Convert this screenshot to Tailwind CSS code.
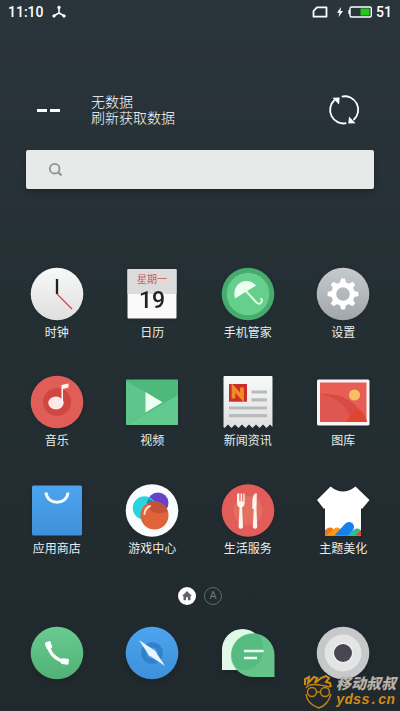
<!DOCTYPE html>
<html lang="zh-CN">
<head>
<meta charset="utf-8">
<meta name="viewport" content="width=device-width, initial-scale=1">
<title>桌面</title>
<script src="https://cdn.jsdelivr.net/npm/@tailwindcss/browser@4"></script>
</head>
<body class="relative flex min-h-screen flex-col bg-linear-to-b from-[#2a343b] via-[#242f34] via-45% to-[#20292d] font-['Roboto','Noto_Sans_CJK_SC',sans-serif] text-[#e9eeee]">

<header class="flex h-6 items-center justify-between px-2 text-sm font-medium text-white">
  <div class="flex items-center gap-2">
    <time>11:10</time>
    <svg class="size-3.5" viewBox="0 0 14 14" fill="#fff" stroke="#fff" aria-hidden="true"><path d="M7 3v5M7 8l-4.500 2.500M7 8l4.500 2.500" stroke-width="1.500"/><circle cx="7" cy="2.500" r="1.300"/><circle cx="2" cy="11" r="1.200"/><circle cx="12" cy="11" r="1.200"/></svg>
  </div>
  <div class="flex items-center gap-1">
    <svg class="mr-1 h-3 w-4" viewBox="0 0 16 12" fill="none" stroke="#fff" stroke-width="1.800" aria-hidden="true"><path d="M5 1.300h9.500v9.400H1.500V5z" stroke-linejoin="round"/></svg>
    <svg class="h-3 w-2" viewBox="0 0 8 12" fill="#fff" aria-hidden="true"><path d="M5 1 1 6.700h2.400L2.500 11l4.500-6H4.500z"/></svg>
    <svg class="h-3 w-6" viewBox="0 0 24 12" aria-hidden="true"><rect x="2" y="1" width="21.300" height="10" rx="1.500" fill="none" stroke="#fff" stroke-width="1.400"/><path d="M.4 4h1.600v4H.4z" fill="#fff"/><path d="M12.500 2.500h9v7h-9z" fill="#20c91c"/></svg>
    <span>51</span>
  </div>
</header>

<section class="mt-[70px] flex items-center pr-10 pl-9">
  <span class="flex w-[55px] gap-[3px]" aria-label="--"><i class="ml-[1px] h-[3px] w-[10px] bg-white"></i><i class="h-[3px] w-[10px] bg-white"></i></span>
  <p class="flex-1 text-sm leading-4 font-light text-white">无数据<br>刷新获取数据</p>
  <button aria-label="刷新" class="size-8">
    <svg viewBox="0 0 32 32" fill="none" stroke="#fff" stroke-width="1.800" aria-hidden="true"><path d="M13.700 2.600A13.500 13.500 0 0 1 25.500 26M18.300 29.200A13.500 13.500 0 0 1 6.500 6"/><path d="M4.500 3.700 11.700 3.400l-.7 7zM27.500 29.300l-7.200.3.700-7z" fill="#fff" stroke="none"/></svg>
  </button>
</section>

<form role="search" class="mx-[26px] mt-6 flex h-[39px] items-center rounded-xs bg-[#e8eae9] px-[22px] shadow-md shadow-black/20">
  <label for="search" aria-label="搜索"><svg class="size-4" viewBox="0 0 16 16" fill="none" stroke="#919393" aria-hidden="true"><circle cx="6.700" cy="6.700" r="4.800" stroke-width="1.800"/><path d="m10 10 3.500 3.500" stroke-width="2.200"/></svg></label>
  <input id="search" type="search" class="h-full min-w-0 flex-1 bg-transparent px-2 text-sm text-gray-700 outline-none">
</form>

<main class="mt-[75px] grid grid-cols-4 gap-y-[30px] px-[9px] text-xs leading-[18px]">
  <button class="flex flex-col items-center">
    <svg class="size-[60px] drop-shadow-sm" viewBox="0 0 60 60" aria-hidden="true"><defs><linearGradient id="white" x2="0" y2="1"><stop stop-color="#f8f9f9"/><stop offset="1" stop-color="#dfdfdf"/></linearGradient></defs><circle cx="30" cy="30" r="26.300" fill="url(#white)"/><path d="M30 15v15" stroke="#222" stroke-width="2.300"/><path d="m30 30 15 15" stroke="#e0403c" stroke-width="1.300"/></svg>
    时钟
  </button>
  <button class="flex flex-col items-center">
    <svg class="size-[60px] drop-shadow-sm" viewBox="0 0 60 60" aria-hidden="true"><rect x="5.500" y="5" width="49" height="49.500" rx="1" fill="#fafafa"/><path d="M5.500 6a1 1 0 0 1 1-1h47a1 1 0 0 1 1 1v24h-49z" fill="#dcdada"/><text x="30" y="19" text-anchor="middle" font-size="10" fill="#cf5458">星期一</text><text x="30" y="44" text-anchor="middle" font-family="Roboto, sans-serif" font-weight="500" font-size="23" fill="#222">19</text></svg>
    日历
  </button>
  <button class="flex flex-col items-center">
    <svg class="size-[60px] drop-shadow-sm" viewBox="0 0 60 60" aria-hidden="true"><circle cx="30" cy="30" r="26.300" fill="#46ab6c"/><circle cx="30" cy="30" r="21.300" fill="#66cf8c"/><path d="M17 34.500C13 19 29 11.500 38 21.500L27.500 28z" fill="#ecfff0"/><path d="m26 25 12.500 13.500q2.300 2.200 4.500.2 1.800-2 .2-4" fill="none" stroke="#dcffe5" stroke-width="1.900" stroke-linecap="round"/></svg>
    手机管家
  </button>
  <button class="flex flex-col items-center">
    <svg class="size-[60px] drop-shadow-sm" viewBox="0 0 60 60" aria-hidden="true"><defs><linearGradient id="gray" x2="0" y2="1"><stop stop-color="#c5cacd"/><stop offset="1" stop-color="#a0a6ab"/></linearGradient></defs><circle cx="30" cy="30" r="26.300" fill="url(#gray)"/><circle cx="30" cy="30" r="9.300" fill="none" stroke="#fff" stroke-width="5"/><g fill="#fff"><path id="tooth" d="m26.800 19.500 1.300-4.900h3.800l1.300 4.900zM26.800 40.500l1.300 4.900h3.800l1.300-4.900z"/><use href="#tooth" transform="rotate(45 30 30)"/><use href="#tooth" transform="rotate(90 30 30)"/><use href="#tooth" transform="rotate(135 30 30)"/></g></svg>
    设置
  </button>

  <button class="flex flex-col items-center">
    <svg class="size-[60px] drop-shadow-sm" viewBox="0 0 60 60" aria-hidden="true"><circle cx="30" cy="30" r="26.300" fill="#e15e58"/><circle cx="30" cy="30" r="14" fill="#d04742"/><ellipse cx="29" cy="31" rx="7.700" ry="6.500" fill="#ffe9e6"/><path d="M34.500 31V13l7-1.500v4L36 17v14z" fill="#fff4f2"/></svg>
    音乐
  </button>
  <button class="flex flex-col items-center">
    <svg class="size-[60px] drop-shadow-sm" viewBox="0 0 60 60" aria-hidden="true"><rect x="4" y="7.500" width="52" height="45.500" rx="1" fill="#4fb97b"/><path d="M4 8.500v44L29 38 37 28z" fill="#52be80"/><path d="M4 53 56 23v29a1 1 0 0 1-1 1z" fill="#63ca8f"/><path d="M4 9v43.500L23.500 41V20z" fill="#65c990" opacity=".65"/><path d="m23.500 20 17 10.300-17 10.200z" fill="#edfff3"/></svg>
    视频
  </button>
  <button class="flex flex-col items-center">
    <svg class="size-[60px] drop-shadow-sm" viewBox="0 0 60 60" aria-hidden="true"><path d="M5.500 5a1 1 0 0 1 1-1h47a1 1 0 0 1 1 1v50l-2.500-2.500-3.500 3.500-3.500-3.500-3.500 3.500-3.500-3.500-3.500 3.500-3.500-3.500-3.500 3.500-3.500-3.500-3.500 3.500-3.500-3.500-3.500 3.500-3.500-3.500-3.500 3.500L5.500 55z" fill="url(#white)"/><rect x="11" y="12" width="18" height="17.700" fill="#c9302b"/><path d="M15.500 26.500v-10.500l8.500 9.500V15.500" fill="none" stroke="#f28c22" stroke-width="3.700"/><path d="M33.500 20H49M33.500 27.800H49M11 36h38M11 43.700h38" stroke="#b9bbbb" stroke-width="3.200"/></svg>
    新闻资讯
  </button>
  <button class="flex flex-col items-center">
    <svg class="size-[60px] drop-shadow-sm" viewBox="0 0 60 60" aria-hidden="true"><rect x="4" y="7.500" width="52.500" height="46" rx="1.500" fill="#f8f5f4"/><path d="M7 10.500h46.500v39.500H7z" fill="#e75e56"/><path d="M7 22q32-2 46.500 26v2H7z" fill="#d94a44"/><path d="M7 22q24 4 33 28H7z" fill="#e5605a" opacity=".6"/><path d="M33 50q7-12 14-12 5 4 6.500 10v2z" fill="#e04530"/><circle cx="41.500" cy="23" r="5.600" fill="#fbbd65"/></svg>
    图库
  </button>

  <button class="flex flex-col items-center">
    <svg class="size-[60px] drop-shadow-sm" viewBox="0 0 60 60" aria-hidden="true"><defs><linearGradient id="bag" x2="0" y2="1"><stop stop-color="#4da4ee"/><stop offset="1" stop-color="#3e90da"/></linearGradient></defs><rect x="5" y="5.500" width="50" height="50" rx="1.500" fill="url(#bag)"/><path d="M19 12.500c1 13 21 13 22 0" fill="none" stroke="#f2faff" stroke-width="3"/></svg>
    应用商店
  </button>
  <button class="flex flex-col items-center">
    <svg class="size-[60px] drop-shadow-sm" viewBox="0 0 60 60" aria-hidden="true"><circle cx="30" cy="30.500" r="26.300" fill="#fafdfd"/><circle cx="36" cy="23" r="10.500" fill="#6542c7"/><circle cx="22.500" cy="28" r="11.700" fill="#28d5df"/><path d="M26.500 18.500a10.500 10.500 0 0 1 7.500 10l-6 4a10.500 10.500 0 0 1-1.500-14z" fill="#168bc5"/><circle cx="32.500" cy="35.500" r="14" fill="#e0633a"/><path d="M26 23.100a14 14 0 0 1 19.800 8.300q-10 4-17-1-3-3-2.800-7.300z" fill="#c4513a"/><path d="M22.500 34q.3-5.500 5.500-8" fill="none" stroke="#ffdecc" stroke-width="2" stroke-linecap="round"/></svg>
    游戏中心
  </button>
  <button class="flex flex-col items-center">
    <svg class="size-[60px] drop-shadow-sm" viewBox="0 0 60 60" aria-hidden="true"><circle cx="30" cy="30.500" r="26.300" fill="#e25d59"/><circle cx="30" cy="30.500" r="14.500" fill="#e36f60"/><g fill="#fff3ee"><path d="M19 13.500v9c0 3 1 4.200 2.500 5l-.9 19c0 3 4.400 3 4.400 0l-.9-19c1.500-.8 2.500-2 2.500-5v-9h-1.300v8h-1.200v-8h-1.500v8h-1.200v-8z"/><path d="M38.800 13.300c-3-.5-4.500 4-4.500 9.200v6.500h1.500l-1 17.500c0 3 4.400 3 4.400 0L38.500 29z"/></g></svg>
    生活服务
  </button>
  <button class="flex flex-col items-center">
    <svg class="size-[60px] drop-shadow-sm" viewBox="0 0 60 60" aria-hidden="true"><defs><clipPath id="shirt"><path d="M4 20 17.500 6.500q12.500 10 25 0L56.500 20 49 29l-1-1v27.500H12V28l-1 1z"/></clipPath></defs><g clip-path="url(#shirt)"><path d="M0 0h60v60H0z" fill="#fff"/><g stroke-linecap="round" stroke-width="9"><path d="m6 61 11-9" stroke="#ed7621"/><path d="m15 60 9-8" stroke="#fb9b16"/><path d="m35 60 9-7" stroke="#2dbd92"/><path d="m24 60 12-13" stroke="#1482ed" stroke-width="10"/></g><path d="m42 56 6-6v6z" fill="#df4b25"/></g></svg>
    主题美化
  </button>
</main>

<nav aria-label="页面" class="mt-[29px] flex justify-center gap-2">
  <button aria-label="主页" class="size-[18px]"><svg viewBox="0 0 18 18" aria-hidden="true"><circle cx="9" cy="9" r="9" fill="#fff"/><path d="M9 4 4 9h1.500v4.300H8v-3h2v3h2.500V9H14z" fill="#606363"/></svg></button>
  <button aria-label="第二页" class="flex size-[18px] items-center justify-center rounded-full border border-[#606a6d] text-[11px] leading-4 text-[#707a7d]">A</button>
</nav>

<footer class="mt-[18px] mb-7 grid grid-cols-4 px-[9px]">
  <button aria-label="电话" class="flex justify-center">
    <svg class="size-[60px] drop-shadow-md" viewBox="0 0 60 60" aria-hidden="true"><defs><linearGradient id="green" x2="0" y2="1"><stop stop-color="#6acb91"/><stop offset="1" stop-color="#51b277"/></linearGradient></defs><circle cx="30" cy="30" r="26.300" fill="url(#green)"/><path d="M21 20.500q1.500 14 17 18.500" fill="none" stroke="#fff" stroke-width="3.200"/><rect x="18.500" y="18.500" width="6" height="7.500" rx="1.500" fill="#fff" transform="rotate(-18 21.500 22)"/><rect x="34" y="35.500" width="7.800" height="6" rx="1.500" fill="#fff" transform="rotate(8 38 38.500)"/></svg>
  </button>
  <button aria-label="浏览器" class="flex justify-center">
    <svg class="size-[60px] drop-shadow-md" viewBox="0 0 60 60" aria-hidden="true"><circle cx="30" cy="30" r="26.300" fill="url(#bag)"/><circle cx="30" cy="30" r="10.800" fill="#3480ca"/><circle cx="30" cy="30" r="5.500" fill="#4b9ee9"/><path d="m17 17 16 10.700L43 43 27 32.300z" fill="#e8f7ff"/></svg>
  </button>
  <button aria-label="信息" class="flex justify-center">
    <svg class="size-[60px] drop-shadow-md" viewBox="0 0 60 60" aria-hidden="true"><path d="M4 47V26.500a20.500 20.500 0 0 1 41 0V47z" fill="#e0f8e6"/><path d="M34.800 10.300A21.700 21.700 0 0 1 56.500 32v22H34.800a21.800 21.800 0 0 1 0-43.700z" fill="#65c48a"/><path d="M41 11.500c9 13 3 34-13 35.500q-6 0-11-4C8 26 20 8 41 11.500z" fill="#46b174" opacity=".5"/><path d="M26 28h19.500M26 35h13" stroke="#effff4" stroke-width="2.400"/></svg>
  </button>
  <button aria-label="相机" class="flex justify-center">
    <svg class="size-[60px] drop-shadow-md" viewBox="0 0 60 60" aria-hidden="true"><circle cx="30" cy="30" r="26.300" fill="#c6c8c9"/><circle cx="30" cy="30" r="18.500" fill="#e3e4e4"/><circle cx="30" cy="30" r="10" fill="#f5f5f5"/><circle cx="30" cy="30" r="9" fill="#48464f"/></svg>
  </button>
</footer>

<aside class="absolute right-1 bottom-0.5 flex items-center gap-0.5">
  <svg class="h-[34px] w-[31px]" viewBox="0 0 31 34" fill="none" stroke="#c7820e" stroke-width="1.400" aria-hidden="true"><path d="M2 10V4l4-2-1 6 6-6 3 1-2 5 6-5 5-2 3 2-3 4 4 1 1 4" stroke="#d18b12" stroke-width="2"/><path d="M3 13q3-4 9-3.500t15 2.500M3 19q1 10 13 14 9-3 12-14"/><circle cx="9" cy="17" r="4.500"/><circle cx="22" cy="17" r="4.500"/><path d="M13.500 17h4"/></svg>
  <p class="flex flex-col text-[15px] leading-4 font-black text-[#b9b1a5] italic">移动叔叔<span class="font-['Liberation_Mono',monospace] text-sm leading-4 font-bold text-[#d18b12]">ydss.cn</span></p>
</aside>
</body>
</html>
